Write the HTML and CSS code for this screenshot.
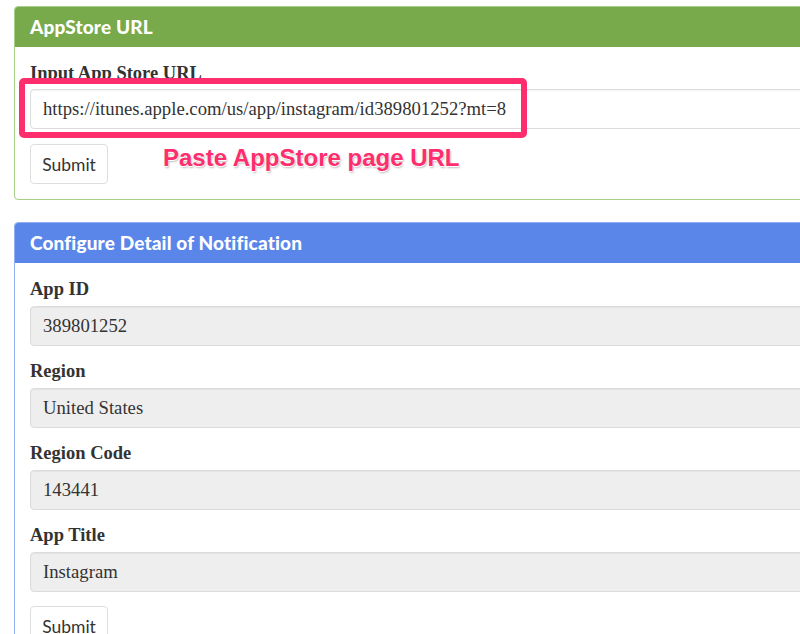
FILE: index.html
```html
<!DOCTYPE html>
<html>
<head>
<meta charset="utf-8">
<link rel="stylesheet" href="styles.css">
</head>
<body>
<div class="wrap">
  <section class="panel panel-green">
    <div class="panel-heading">AppStore URL</div>
    <div class="panel-body">
      <div class="form-group">
        <label class="label">Input App Store URL</label>
        <div class="field-wrap">
          <input class="input" type="text" value="https://itunes.apple.com/us/app/instagram/id389801252?mt=8">
          <span class="highlight-box"></span>
        </div>
      </div>
      <button class="btn">Submit</button>
      <span class="annotation">Paste AppStore page URL</span>
    </div>
  </section>

  <section class="panel panel-blue">
    <div class="panel-heading">Configure Detail of Notification</div>
    <div class="panel-body">
      <div class="form-group">
        <label class="label">App ID</label>
        <input class="input readonly" type="text" value="389801252" readonly>
      </div>
      <div class="form-group">
        <label class="label">Region</label>
        <input class="input readonly" type="text" value="United States" readonly>
      </div>
      <div class="form-group">
        <label class="label">Region Code</label>
        <input class="input readonly" type="text" value="143441" readonly>
      </div>
      <div class="form-group">
        <label class="label">App Title</label>
        <input class="input readonly" type="text" value="Instagram" readonly>
      </div>
      <button class="btn">Submit</button>
    </div>
  </section>
</div>
</body>
</html>
```

FILE: styles.css
```css
html, body {
  margin: 0;
  padding: 0;
  background: #fff;
  overflow: hidden;
  width: 800px;
  height: 634px;
}
.wrap {
  padding: 6px 0 0 14px;
  width: 900px;
}
.panel {
  width: 840px;
  border: 1px solid #a9d08e;
  border-radius: 4px;
  margin-bottom: 22px;
  background: #fff;
}
.panel-green { border-color: #a6cf89; }
.panel-blue { border-color: #8fb0f2; }
.panel-heading {
  height: 40px;
  line-height: 40px;
  padding: 0 15px;
  color: #fff;
  font-family: Lato, "Open Sans", sans-serif;
  font-weight: 900;
  font-size: 19px;
  letter-spacing: 0.15px;
  border-radius: 3px 3px 0 0;
}
.panel-green .panel-heading { background: #78a94a; }
.panel-blue .panel-heading { background: #5a86ea; }
.panel-body {
  position: relative;
  padding: 15px;
}
.form-group {
  margin-bottom: 14px;
}
.panel-green .form-group { margin-bottom: 15px; }
.label {
  display: block;
  font-family: "Liberation Serif", serif;
  font-weight: 700;
  font-size: 18.5px;
  line-height: 22px;
  color: #333;
  margin-bottom: 6px;
}
.panel-green .label { margin-bottom: 5px; }
.field-wrap {
  position: relative;
}
.input {
  display: block;
  box-sizing: border-box;
  width: 100%;
  height: 40px;
  padding: 0 12px;
  border: 1px solid #dcdcdc;
  border-radius: 4px;
  box-shadow: inset 0 1px 1px rgba(0,0,0,0.05);
  background: #fff;
  font-family: "Liberation Serif", serif;
  font-size: 18.7px;
  color: #333;
  outline: none;
}
.input.readonly {
  background: #eeeeee;
}
.btn {
  display: block;
  box-sizing: border-box;
  height: 40px;
  width: 78px;
  padding: 0;
  border: 1px solid #dedede;
  border-radius: 4px;
  background: #fff;
  font-family: Lato, "Open Sans", sans-serif;
  font-size: 17.5px;
  color: #333;
}
.highlight-box {
  position: absolute;
  left: -11px;
  top: -11px;
  width: 508px;
  height: 60px;
  box-sizing: border-box;
  border: 6px solid #fe2d6e;
  border-radius: 5px;
}
.annotation {
  position: absolute;
  left: 148px;
  top: 99px;
  font-family: "Liberation Sans", Arial, sans-serif;
  font-weight: 700;
  font-size: 24px;
  line-height: 24px;
  color: #fe2d6e;
  white-space: nowrap;
  text-shadow: 0 1px 0 #fff, 1px 2px 2px rgba(0,0,0,0.25);
}
```
